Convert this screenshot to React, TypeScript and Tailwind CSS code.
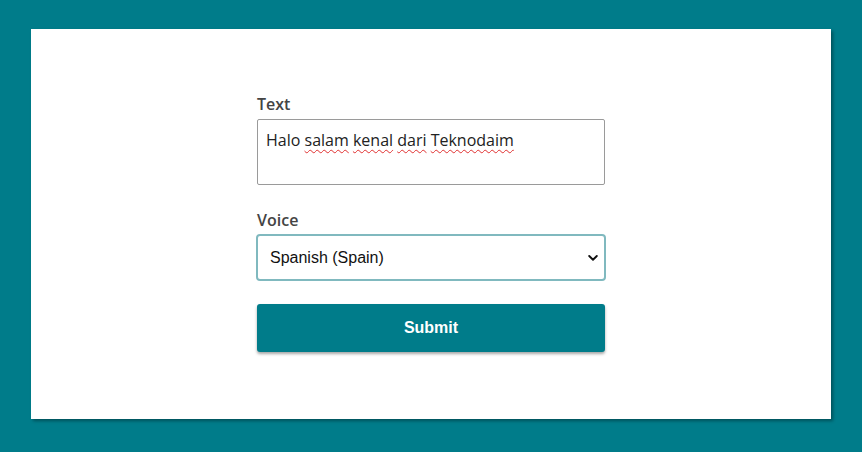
import React from 'react';

const App: React.FC = () => {
  const words = ['salam', 'kenal', 'dari', 'Teknodaim'];

  return (
    <div className="min-h-[452px] w-full bg-[#007c8a] pt-[29px] pb-[33px] px-[31px]">
      <div className="h-[390px] bg-white shadow-[2px_2px_3px_rgba(0,0,0,0.35)] flex justify-center pt-[64px]">
        <form className="w-[348px] flex flex-col" onSubmit={(e) => e.preventDefault()}>
          {/* Text */}
          <label className="text-[16px] leading-[22px] font-semibold text-[#444] mb-[4px] font-['Open_Sans',sans-serif]">
            Text
          </label>
          <div className="h-[66px] border border-[#9a9a9a] rounded-[2px] px-2 pt-[8px] text-[16px] leading-6 text-[#222] font-['Open_Sans',sans-serif]">
            Halo{' '}
            {words.map((w, i) => (
              <span key={w}>
                <span className="underline decoration-wavy decoration-[#e03030] decoration-1 underline-offset-[3px]">{w}</span>
                {i < words.length - 1 ? ' ' : ''}
              </span>
            ))}
          </div>

          {/* Voice */}
          <label className="mt-[24px] text-[16px] leading-[22px] font-semibold text-[#444] mb-[3px] font-['Open_Sans',sans-serif]">
            Voice
          </label>
          <div className="relative -mx-px">
            <select
              defaultValue="es-ES"
              className="w-full h-[47px] appearance-none border-2 border-[#80b9bf] rounded-[4px] bg-white pl-3 pr-8 text-[16px] text-[#111] font-['Liberation_Sans',Arial,sans-serif] outline-none"
            >
              <option value="en-US">English (US)</option>
              <option value="id-ID">Indonesian</option>
              <option value="es-ES">Spanish (Spain)</option>
            </select>
            <svg
              className="absolute right-[8px] top-1/2 -translate-y-1/2 pointer-events-none"
              width="10"
              height="7"
              viewBox="0 0 10 7"
              fill="none"
            >
              <path d="M1.2 1.5 L5 5.2 L8.8 1.5" stroke="#111" strokeWidth="1.9" strokeLinecap="round" strokeLinejoin="round" />
            </svg>
          </div>

          <button
            type="submit"
            className="mt-[23px] h-[48px] w-full bg-[#007c8a] rounded-[3px] text-white text-[16px] font-bold font-['Liberation_Sans',Arial,sans-serif] shadow-[0_2px_3px_rgba(0,0,0,0.35)]"
          >
            Submit
          </button>
        </form>
      </div>
    </div>
  );
};

export default App;
